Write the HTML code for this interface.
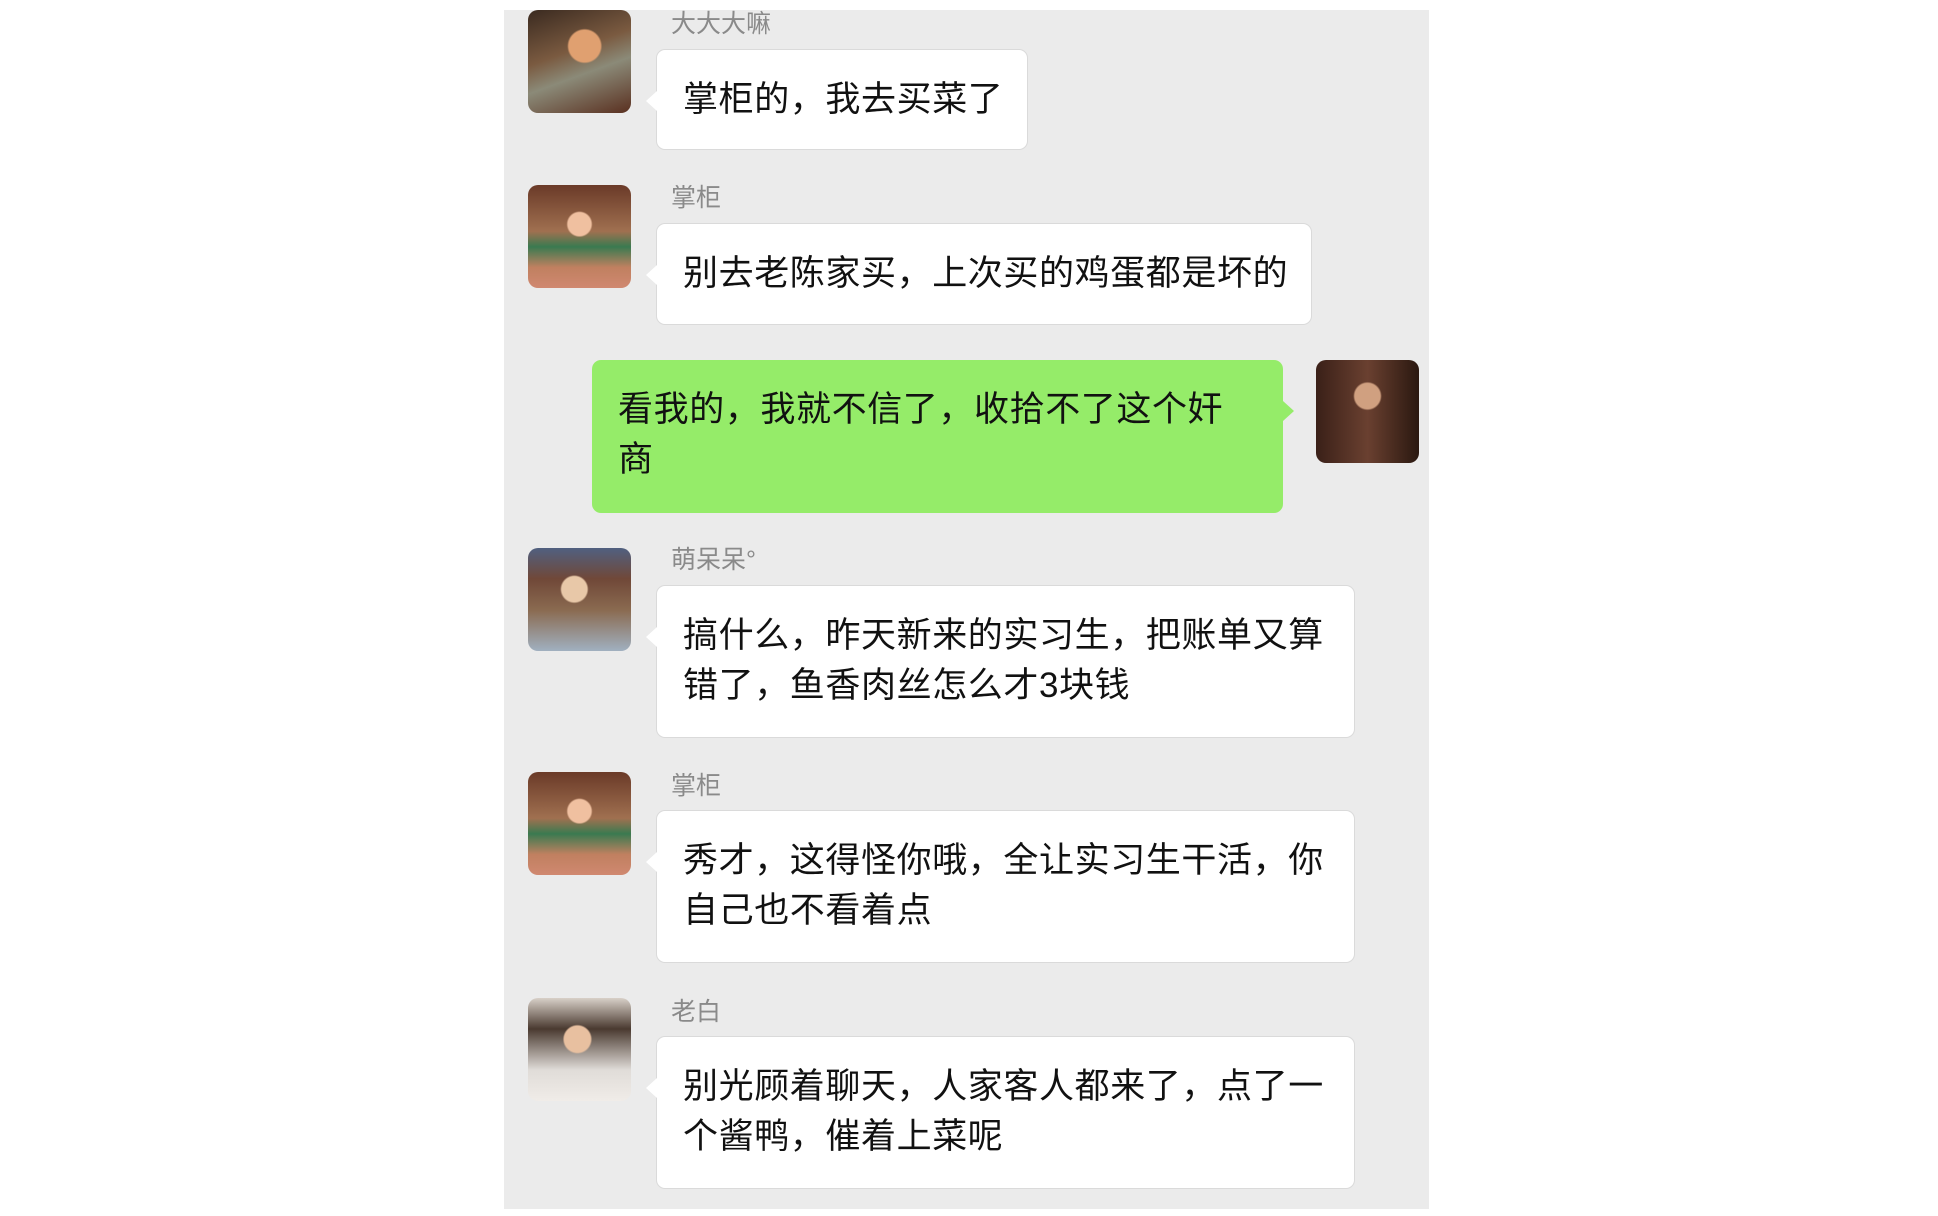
<!DOCTYPE html>
<html><head><meta charset="utf-8"><style>
*{margin:0;padding:0;box-sizing:border-box}
body{width:1938px;height:1216px;background:#fff;position:relative;overflow:hidden;font-family:"Liberation Sans","Noto Sans CJK SC",sans-serif}
.panel{position:absolute;left:504px;top:10px;width:925px;height:1199px;background:#ebebeb}
.av{position:absolute;width:103px;height:103px;border-radius:10px;overflow:hidden}
.name{position:absolute;left:671px;font-size:25px;color:#8a8a8a;line-height:30px}
.b{position:absolute;left:656px;background:#fff;border:1px solid #dadada;border-radius:9px;padding:25px 26px;font-size:35px;letter-spacing:0.6px;line-height:50px;color:#111;white-space:nowrap}
.b::before{content:"";position:absolute;left:-11px;top:41px;border-style:solid;border-width:10px 11px 10px 0;border-color:transparent #fff transparent transparent}
.g{position:absolute;left:592px;top:360px;width:691px;height:153px;background:#95ec69;border-radius:9px;padding:25px 26px;font-size:35px;letter-spacing:0.6px;line-height:50px;color:#111;white-space:nowrap}
.g::after{content:"";position:absolute;right:-11px;top:41px;border-style:solid;border-width:10px 0 10px 11px;border-color:transparent transparent transparent #95ec69}
</style></head><body>
<div class="panel"></div>

<div class="av" style="left:528px;top:10px;background:radial-gradient(circle at 55% 35%,#e0a070 0 18%,transparent 20%),linear-gradient(160deg,#3a2a20,#7a5a40 40%,#8b8a78 60%,#5a3020)"></div>
<div class="name" style="top:9px">大大大嘛</div>
<div class="b" style="top:49px;width:372px;height:101px">掌柜的，我去买菜了</div>

<div class="av" style="left:528px;top:185px;background:radial-gradient(circle at 50% 38%,#f0c0a0 0 14%,transparent 16%),linear-gradient(180deg,#6a3a28,#a07050 45%,#3a7a50 60%,#c08060 80%,#d08870)"></div>
<div class="name" style="top:183px">掌柜</div>
<div class="b" style="top:223px;width:656px;height:102px">别去老陈家买，上次买的鸡蛋都是坏的</div>

<div class="g">看我的，我就不信了，收拾不了这个奸<br>商</div>
<div class="av" style="left:1316px;top:360px;background:radial-gradient(circle at 50% 35%,#d0a080 0 15%,transparent 17%),linear-gradient(90deg,#3a2018,#6a4030 50%,#2a1810)"></div>

<div class="av" style="left:528px;top:548px;background:radial-gradient(circle at 45% 40%,#e8c8a8 0 15%,transparent 17%),linear-gradient(180deg,#506080,#704838 30%,#8a6a50 60%,#a0b0c0)"></div>
<div class="name" style="top:545px">萌呆呆°</div>
<div class="b" style="top:585px;width:699px;height:153px">搞什么，昨天新来的实习生，把账单又算<br>错了，鱼香肉丝怎么才3块钱</div>

<div class="av" style="left:528px;top:772px;background:radial-gradient(circle at 50% 38%,#f0c0a0 0 14%,transparent 16%),linear-gradient(180deg,#6a3a28,#a07050 45%,#3a7a50 60%,#c08060 80%,#d08870)"></div>
<div class="name" style="top:771px">掌柜</div>
<div class="b" style="top:810px;width:699px;height:153px">秀才，这得怪你哦，全让实习生干活，你<br>自己也不看着点</div>

<div class="av" style="left:528px;top:998px;background:radial-gradient(circle at 48% 40%,#e8c0a0 0 16%,transparent 18%),linear-gradient(180deg,#d8d0c8,#4a3a30 30%,#e0dcd8 70%,#f0ece8)"></div>
<div class="name" style="top:997px">老白</div>
<div class="b" style="top:1036px;width:699px;height:153px">别光顾着聊天，人家客人都来了，点了一<br>个酱鸭，催着上菜呢</div>
</body></html>
